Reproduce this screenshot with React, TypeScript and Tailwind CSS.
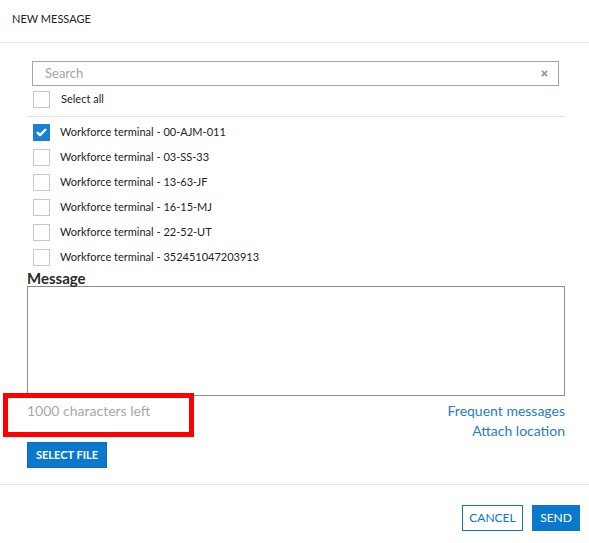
const terminals = [
  { name: 'Workforce terminal - 00-AJM-011', checked: true },
  { name: 'Workforce terminal - 03-SS-33', checked: false },
  { name: 'Workforce terminal - 13-63-JF', checked: false },
  { name: 'Workforce terminal - 16-15-MJ', checked: false },
  { name: 'Workforce terminal - 22-52-UT', checked: false },
  { name: 'Workforce terminal - 352451047203913', checked: false },
];

function Checkbox({ checked }: { checked?: boolean }) {
  if (checked) {
    return (
      <span className="w-[17px] h-[17px] bg-[#1a7fd6] flex items-center justify-center flex-shrink-0">
        <svg className="w-[11px] h-[11px]" viewBox="0 0 12 12" fill="none" stroke="white" strokeWidth={2.6} strokeLinecap="round" strokeLinejoin="round">
          <path d="M1.8 6.4l2.6 2.5L10.2 3" />
        </svg>
      </span>
    );
  }
  return <span className="w-[17px] h-[17px] border border-[#c8c8c8] bg-white flex-shrink-0" />;
}

export default function App() {
  return (
    <div className="relative w-[589px] h-[543px] bg-white text-[#222] font-['Lato','Liberation_Sans',sans-serif]">
      <div className="h-[43px] px-3 pb-[3px] flex items-center border-b border-[#e6e6e6]">
        <span className="text-[11px] uppercase text-[#222]">New Message</span>
      </div>

      <div className="pl-[27px] pr-[24px]">
        <div className="mt-[18px] ml-[5px] mr-[6px] h-[25px] border border-[#a0a4ab] flex items-center pl-3 pr-[10px]">
          <span className="flex-1 text-[13px] text-[#a3a3a3]">Search</span>
          <svg className="w-[7px] h-[7px]" viewBox="0 0 8 8" stroke="#9a9a9a" strokeWidth={2.2}>
            <path d="M1 1l6 6M7 1L1 7" />
          </svg>
        </div>

        <div className="flex items-center gap-[11px] ml-[6px] pt-[5px] pb-[8px]">
          <Checkbox />
          <span className="text-[11px]">Select all</span>
        </div>
        <div className="border-t border-[#e6e6e6]" />

        <div className="mt-[3px]">
          {terminals.map((t) => (
            <div key={t.name} className="h-[25px] flex items-center gap-[10px] ml-[6px]">
              <Checkbox checked={t.checked} />
              <span className="text-[11px]">{t.name}</span>
            </div>
          ))}
        </div>

        <div className="text-[15px] font-bold leading-[16px] text-[#2a2a2a]">Message</div>
        <div className="h-[110px] border border-[#8c8c8c]" />

        <div className="flex justify-between mt-[5px] text-[14px] leading-[20px]">
          <span className="text-[#a8a8a8]">1000 characters left</span>
          <div className="flex flex-col items-end text-[#2b7ac6]">
            <span>Frequent messages</span>
            <span>Attach location</span>
          </div>
        </div>

        <button className="mt-[1px] w-[80px] h-[26px] bg-[#0a78cc] border border-[#0a6db8] text-white text-[11px] font-bold uppercase">
          Select file
        </button>
      </div>

      <div className="mt-[16px] border-t border-[#e6e6e6] flex justify-end gap-[9px] pt-[20px] pr-[9px]">
        <button className="w-[61px] h-[26px] border border-[#0a78cc] text-[#0a78cc] text-[12px] uppercase bg-white">
          Cancel
        </button>
        <button className="w-[48px] h-[26px] bg-[#0a78cc] text-white text-[12px] uppercase">
          Send
        </button>
      </div>

      <div className="absolute left-[3px] top-[393px] w-[191px] h-[44px] border-[5px] border-[#ff0000]" />
    </div>
  );
}
